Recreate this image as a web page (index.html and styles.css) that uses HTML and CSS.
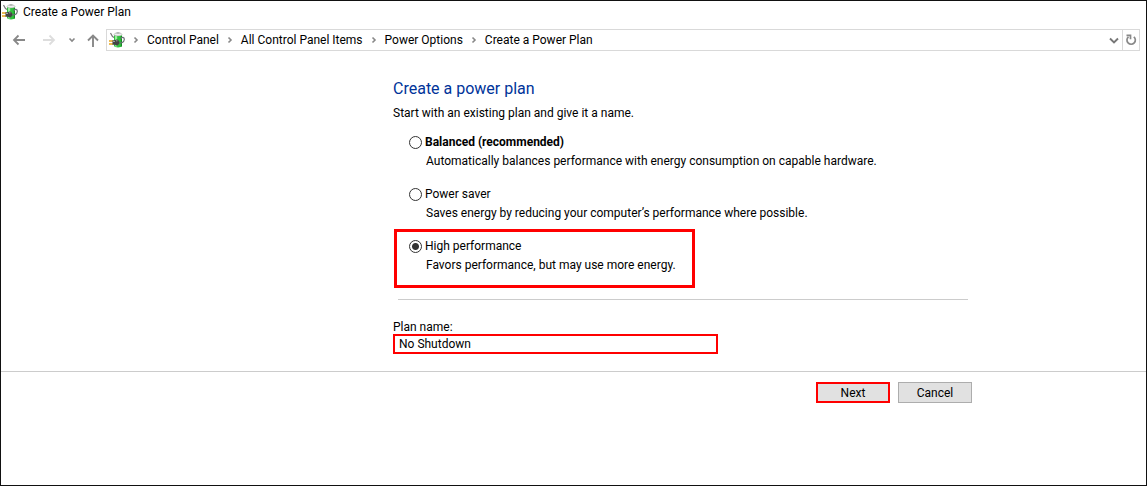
FILE: index.html
```html
<!DOCTYPE html>
<html lang="en">
<head>
	<title>Create a Power Plan</title>
	<meta charset="utf-8">
	<link rel="stylesheet" href="styles.css">
</head>
<body>
	<!-- battery with plug, used in the title bar and the address bar -->
	<svg class="defs" aria-hidden="true">
		<symbol id="power" viewBox="0 0 16 16">
			<path d="M1.500 1l2 3.500 1.500 1" stroke="#777" stroke-width="1.200" fill="none"/>
			<path d="M5 2.500h8v11.300c0 2.200-8 2.200-8 0z" fill="#2fc23c"/>
			<path d="M6 4h2.200v10.500H6z" fill="#9af09c"/>
			<path d="M11.800 4H13v10.500h-1.200z" fill="#168a24"/>
			<ellipse cx="9" cy="2.400" rx="4" ry="1.500" fill="#eef1ee" stroke="#999" stroke-width=".5"/>
			<rect x="7.500" y=".2" width="3" height="1.500" fill="#aab0ab"/>
			<path d="M10 10.500c2 1 5 0 5.300-3C15.500 5 12.500 4.500 12 7" stroke="#6b7176" stroke-width="1.200" fill="none"/>
			<path d="M0 9h4M0 12h4" stroke="#e8a61c" stroke-width="1.400"/>
			<path d="M3.500 8.300H6l1-.8h1.500l1.700 1.700v2.600l-1.700 1.700H7l-1-.8H3.500z" fill="#444"/>
			<path d="M4 9.500h2M7 8.800h1.500" stroke="#aaa" stroke-width=".9"/>
		</symbol>
		<symbol id="chevron" viewBox="0 0 6 8">
			<path d="M1.500 1.500L4 4 1.500 6.500" stroke="#888" stroke-width="1.600" fill="none"/>
		</symbol>
	</svg>

	<header class="titlebar">
		<svg class="app-icon"><use href="#power"/></svg>
		<span>Create a Power Plan</span>
	</header>

	<nav class="toolbar">
		<button class="nav-btn back" aria-label="Back">
			<svg width="14" height="12" viewBox="0 0 14 12"><path d="M13 6H2M6.500 1.500L2 6l4.500 4.500" stroke="#888" stroke-width="1.800" fill="none"/></svg>
		</button>
		<button class="nav-btn forward" aria-label="Forward" disabled>
			<svg width="14" height="12" viewBox="0 0 14 12"><path d="M1 6h11M7.500 1.500L12 6l-4.500 4.500" stroke="#ddd" stroke-width="1.800" fill="none"/></svg>
		</button>
		<button class="nav-btn recent" aria-label="Recent locations">
			<svg width="8" height="6" viewBox="0 0 8 6"><path d="M1.500 1.500L4 4l2.500-2.500" stroke="#888" stroke-width="1.600" fill="none"/></svg>
		</button>
		<button class="nav-btn up" aria-label="Up">
			<svg width="12" height="13" viewBox="0 0 12 13"><path d="M6 13V2M1 6.500l5-5 5 5" stroke="#888" stroke-width="1.900" fill="none"/></svg>
		</button>
		<div class="address">
			<svg class="app-icon"><use href="#power"/></svg>
			<svg class="sep"><use href="#chevron"/></svg>
			<a href="#">Control Panel</a>
			<svg class="sep"><use href="#chevron"/></svg>
			<a href="#">All Control Panel Items</a>
			<svg class="sep"><use href="#chevron"/></svg>
			<a href="#">Power Options</a>
			<svg class="sep"><use href="#chevron"/></svg>
			<a href="#">Create a Power Plan</a>
			<button class="nav-btn history" aria-label="Previous locations">
				<svg width="10" height="7" viewBox="0 0 10 7"><path d="M1 1.500l4 4 4-4" stroke="#777" stroke-width="1.900" fill="none"/></svg>
			</button>
			<button class="nav-btn refresh" aria-label="Refresh">
				<svg width="12" height="12" viewBox="0 0 12 12"><path d="M8.800 2.800A4.200 4.200 0 1 1 3.500 2.800M1.500 1.300h4v4" stroke="#888" stroke-width="1.700" fill="none"/></svg>
			</button>
		</div>
	</nav>

	<form>
		<main class="content">
			<h1>Create a power plan</h1>
			<p class="intro">Start with an existing plan and give it a name.</p>

			<div class="option">
				<input type="radio" name="plan" id="balanced">
				<label for="balanced"><b>Balanced (recommended)</b></label>
				<p>Automatically balances performance with energy consumption on capable hardware.</p>
			</div>
			<div class="option">
				<input type="radio" name="plan" id="saver">
				<label for="saver">Power saver</label>
				<p>Saves energy by reducing your computer’s performance where possible.</p>
			</div>
			<div class="option marked">
				<input type="radio" name="plan" id="high" checked>
				<label for="high">High performance</label>
				<p>Favors performance, but may use more energy.</p>
			</div>

			<hr>

			<label class="name-label" for="planname">Plan name:</label>
			<input class="name-box" type="text" id="planname" value="No Shutdown">
		</main>

		<footer>
			<div class="buttons">
				<button type="submit" class="btn next">Next</button>
				<button type="button" class="btn">Cancel</button>
			</div>
		</footer>
	</form>
</body>
</html>
```

FILE: styles.css
```css
* {
	box-sizing: border-box;
}
body {
	margin: 0;
	min-height: 100vh;
	border: 1px solid #111;
	background: #fff;
	color: #000;
	font: 12px/18px "Segoe UI", Roboto, "Open Sans", sans-serif;
}
p, h1 {
	margin: 0;
}
button, input {
	font: inherit;
	color: inherit;
}
svg {
	display: block;
	flex: none;
}
.defs {
	position: absolute;
	width: 0;
	height: 0;
}
.app-icon {
	width: 16px;
	height: 16px;
}

/* title bar */
.titlebar {
	display: flex;
	align-items: center;
	gap: 5px;
	height: 22px;
	padding-left: 1px;
}

/* navigation */
.toolbar {
	display: flex;
	align-items: center;
	margin-top: 6px;
	padding: 0 6px 0 10px;
}
.nav-btn {
	display: flex;
	align-items: center;
	justify-content: center;
	padding: 0;
	border: 0;
	background: none;
}
.back {
	width: 15px;
}
.forward {
	width: 15px;
	margin-left: 15px;
}
.recent {
	width: 8px;
	margin-left: 12px;
}
.up {
	width: 12px;
	margin-left: 11px;
}
.address {
	flex: 1;
	display: flex;
	align-items: center;
	height: 22px;
	margin-left: 7px;
	padding-left: 2px;
	border: 1px solid #d9d9d9;
}
.address a {
	color: #000;
	text-decoration: none;
	white-space: nowrap;
}
.sep {
	width: 6px;
	height: 8px;
	margin: 0 8px;
}
.history {
	width: 16px;
	height: 20px;
	margin-left: auto;
}
.refresh {
	width: 17px;
	height: 20px;
	border-left: 1px solid #d9d9d9;
}

/* page */
.content, .buttons {
	max-width: 579px;
	margin-left: 392px;
}
.content {
	padding: 26px 0 17px;
}
h1 {
	color: #003399;
	font-size: 16px;
	font-weight: normal;
	line-height: 24px;
}
.intro {
	margin: 3px 0 11px;
}
.option {
	display: grid;
	grid-template-columns: 13px 1fr;
	column-gap: 3px;
	align-items: center;
	margin-bottom: 14px;
	padding-left: 16px;
	line-height: 19px;
}
.option p {
	grid-column: 2;
	padding-left: 1px;
}
.option input {
	appearance: none;
	width: 13px;
	height: 13px;
	margin: 0;
	border: 1px solid #333;
	border-radius: 50%;
}
.option input:checked {
	background: radial-gradient(circle, #333 0 3px, #fff 4px);
}
.marked {
	width: 301px;
	margin: -8px 0 11px 1px;
	padding: 5px 0 10px 12px;
	border: 3px solid #f00;
}
hr {
	margin: 0 4px 20px 5px;
	border: 0;
	border-top: 1px solid #ccc;
}
.name-label {
	display: block;
	line-height: 14px;
}
.name-box {
	display: block;
	width: 325px;
	height: 20px;
	padding: 0 4px;
	border: 2px solid #f00;
	background: #fff;
}
footer {
	padding: 10px 0;
	border-top: 1px solid #ccc;
}
.buttons {
	display: flex;
	justify-content: flex-end;
	gap: 8px;
}
.btn {
	width: 74px;
	height: 21px;
	padding: 0;
	border: 1px solid #adadad;
	background: #e1e1e1;
	line-height: 16px;
}
.next {
	border: 2px solid #f00;
}
```
